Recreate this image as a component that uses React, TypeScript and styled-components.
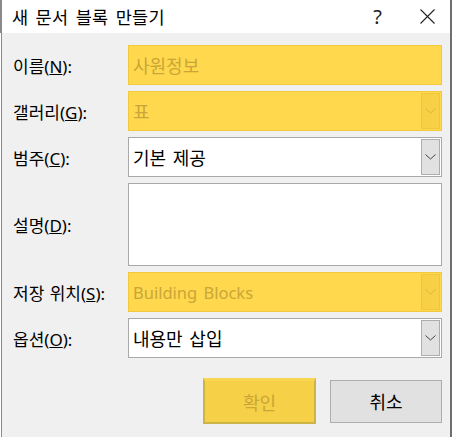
import React from 'react';
import styled, { createGlobalStyle } from 'styled-components';

const GlobalStyle = createGlobalStyle`
    html, body {
        margin: 0;
        padding: 0;
        background: #f0f0f0;
    }
    body {
        font-family: "Noto Sans", "Noto Sans CJK KR", sans-serif;
    }
`;

const Window = styled.div`
    width: 452px;
    height: 437px;
    box-sizing: border-box;
    background: #f0f0f0;
    box-shadow: inset 1px 0 0 #ffffff, inset 2px 0 0 #8a8a8a, inset -2px 0 0 #6f6f6f;
    display: flex;
    flex-direction: column;
    overflow: hidden;
`;

const TitleBar = styled.div`
    height: 33px;
    background: #ffffff;
    display: flex;
    align-items: center;
    padding: 0 17px 0 12px;
    box-shadow: inset 2px 0 0 #8a8a8a, inset -2px 0 0 #6f6f6f;
`;

const Title = styled.div`
    flex: 1;
    font-family: "Noto Sans CJK KR", sans-serif;
    font-size: 17.5px;
    color: #000;
    letter-spacing: 0.3px;
    word-spacing: 3px;
`;

const TitleButton = styled.div<{ $gap?: number }>`
    display: flex;
    align-items: center;
    justify-content: center;
    margin-right: ${p => p.$gap ?? 0}px;
    font-family: "Noto Sans", sans-serif;
    font-size: 20px;
    color: #222;
`;

const Body = styled.div`
    flex: 1;
    padding: 12px 10px 0 13px;
    display: flex;
    flex-direction: column;
`;

const Form = styled.div`
    display: grid;
    grid-template-columns: 115px 314px;
    row-gap: 6px;
    align-items: center;
`;

const Label = styled.label`
    font-size: 17px;
    color: #000;
    white-space: nowrap;
    word-spacing: 1px;
`;

const Field = styled.div<{ $yellow?: boolean; $height?: number }>`
    height: ${p => p.$height ?? 40}px;
    box-sizing: border-box;
    border: 1px solid ${p => (p.$yellow ? '#f2c93c' : '#a9a9a9')};
    background: ${p => (p.$yellow ? '#ffd84d' : '#ffffff')};
    display: flex;
    align-items: center;
    padding-left: 4px;
    color: ${p => (p.$yellow ? '#c9a637' : '#000')};
`;

const FieldText = styled.span<{ $latin?: boolean }>`
    flex: 1;
    font-size: ${p => (p.$latin ? '16.5px' : '18px')};
    word-spacing: 2px;
`;

const DropButton = styled.div<{ $yellow?: boolean }>`
    width: 19px;
    align-self: stretch;
    margin: 1px;
    box-sizing: border-box;
    border: 1px solid ${p => (p.$yellow ? '#efc73d' : '#adadad')};
    background: ${p => (p.$yellow ? '#f7d046' : '#e1e1e1')};
    display: flex;
    align-items: center;
    justify-content: center;
    color: ${p => (p.$yellow ? '#d9b43c' : '#444')};
`;

const Buttons = styled.div`
    display: flex;
    justify-content: flex-end;
    align-items: center;
    gap: 14px;
    margin-top: 20px;
`;

const Button = styled.div<{ $primary?: boolean }>`
    box-sizing: border-box;
    width: ${p => (p.$primary ? 113 : 112)}px;
    height: ${p => (p.$primary ? 46 : 43)}px;
    display: flex;
    align-items: center;
    justify-content: center;
    font-size: 18px;
    border: ${p => (p.$primary ? '2px solid #cbb548' : '1px solid #adadad')};
    border-top-width: ${p => (p.$primary ? 3 : 1)}px;
    border-top-color: ${p => (p.$primary ? '#f8d650' : '#adadad')};
    background: ${p => (p.$primary ? '#f6d046' : '#e1e1e1')};
    color: ${p => (p.$primary ? '#c9a637' : '#000')};
`;

const Chevron: React.FC = () => (
    <svg width="11" height="6" viewBox="0 0 11 6">
        <path d="M0.5 0.5 L5.5 5 L10.5 0.5" fill="none" stroke="currentColor" strokeWidth="1" />
    </svg>
);

const CloseIcon: React.FC = () => (
    <svg width="15" height="15" viewBox="0 0 15 15">
        <path d="M0.5 0.5 L14.5 14.5 M14.5 0.5 L0.5 14.5" fill="none" stroke="#222" strokeWidth="1.1" />
    </svg>
);

const fields = [
    { label: '이름', key: 'N', value: '사원정보', yellow: true },
    { label: '갤러리', key: 'G', value: '표', yellow: true, drop: true },
    { label: '범주', key: 'C', value: '기본 제공', drop: true },
    { label: '설명', key: 'D', value: '', height: 83 },
    { label: '저장 위치', key: 'S', value: 'Building Blocks', yellow: true, drop: true, latin: true },
    { label: '옵션', key: 'O', value: '내용만 삽입', drop: true },
];

const App: React.FC = () => {
    return (
        <>
            <GlobalStyle />
            <Window>
                <TitleBar>
                    <Title>새 문서 블록 만들기</Title>
                    <TitleButton $gap={38}>?</TitleButton>
                    <TitleButton>
                        <CloseIcon />
                    </TitleButton>
                </TitleBar>
                <Body>
                    <Form>
                        {fields.map(f => (
                            <React.Fragment key={f.key}>
                                <Label>
                                    {f.label}(<u>{f.key}</u>):
                                </Label>
                                <Field $yellow={f.yellow} $height={f.height}>
                                    <FieldText $latin={f.latin}>{f.value}</FieldText>
                                    {f.drop && (
                                        <DropButton $yellow={f.yellow}>
                                            <Chevron />
                                        </DropButton>
                                    )}
                                </Field>
                            </React.Fragment>
                        ))}
                    </Form>
                    <Buttons>
                        <Button $primary>확인</Button>
                        <Button>취소</Button>
                    </Buttons>
                </Body>
            </Window>
        </>
    );
};

export default App;
